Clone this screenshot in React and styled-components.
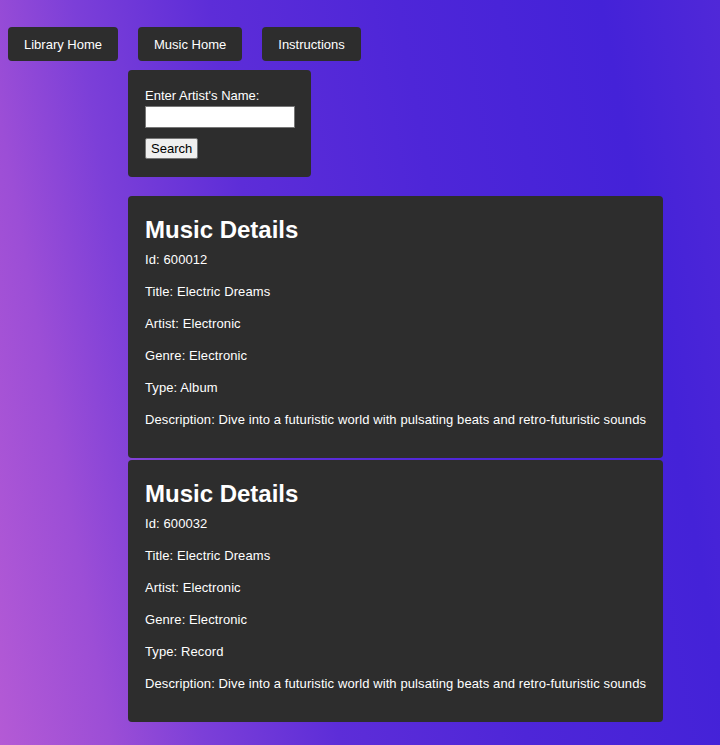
import React, { useState } from 'react';
import styled, { createGlobalStyle } from 'styled-components';

const GlobalStyle = createGlobalStyle`
  html, body {
    min-height: 100%;
  }
  body {
    margin: 8px;
    min-height: 729px;
    font-family: "Liberation Sans", Arial, sans-serif;
    color: #ffffff;
    background: linear-gradient(80deg, #b45ad5 0%, #9c4ed6 13%, #7c3fd8 24%, #5d2dd8 40%, #4e26d8 62%, #4422d8 86%, #5028d8 100%);
    background-attachment: fixed;
  }
`;

const music = [
  { id: 600012, title: 'Electric Dreams', artist: 'Electronic', genre: 'Electronic', type: 'Album',
    description: 'Dive into a futuristic world with pulsating beats and retro-futuristic sounds' },
  { id: 600032, title: 'Electric Dreams', artist: 'Electronic', genre: 'Electronic', type: 'Record',
    description: 'Dive into a futuristic world with pulsating beats and retro-futuristic sounds' },
];

const App = () => {
  const [artist, setArtist] = useState('');

  return (
    <>
      <GlobalStyle />
      <Nav>
        <NavButton>Library Home</NavButton>
        <NavButton>Music Home</NavButton>
        <NavButton>Instructions</NavButton>
      </Nav>
      <Content>
        <SearchBox onSubmit={e => e.preventDefault()}>
          <Label htmlFor="artist">Enter Artist's Name:</Label>
          <TextInput id="artist" value={artist} onChange={e => setArtist(e.target.value)} />
          <SearchButton type="submit">Search</SearchButton>
        </SearchBox>
        <CardList>
          {music.map(item => (
            <Card key={item.id}>
              <Heading>Music Details</Heading>
              <Field>Id: {item.id}</Field>
              <Field>Title: {item.title}</Field>
              <Field>Artist: {item.artist}</Field>
              <Field>Genre: {item.genre}</Field>
              <Field>Type: {item.type}</Field>
              <Field>Description: {item.description}</Field>
            </Card>
          ))}
        </CardList>
      </Content>
    </>
  );
};

export default App;

const Nav = styled.nav`
  display: flex;
  gap: 20px;
  padding-top: 19px;
`;

const NavButton = styled.button`
  height: 34px;
  padding: 0 16px;
  border: none;
  border-radius: 4px;
  background: #2d2d2d;
  color: #ffffff;
  font-family: inherit;
  font-size: 13px;
  cursor: pointer;
`;

const Content = styled.div`
  margin-left: 120px;
  width: 535px;
  padding-top: 9px;
`;

const SearchBox = styled.form`
  width: 183px;
  box-sizing: border-box;
  padding: 18px 17px 18px;
  background: #2d2d2d;
  border-radius: 4px;
  display: flex;
  flex-direction: column;
  align-items: flex-start;
`;

const Label = styled.label`
  font-size: 13px;
  line-height: 16px;
  margin-bottom: 2px;
`;

const TextInput = styled.input`
  width: 150px;
  height: 22px;
  box-sizing: border-box;
  border: 1px solid #767676;
  background: #ffffff;
  padding: 1px 2px;
  font-size: 13px;
  outline: none;
`;

const SearchButton = styled.button`
  margin-top: 10px;
  height: 21px;
  padding: 0 5px;
  background: #efefef;
  border: 1px solid #767676;
  border-radius: 2px;
  color: #000000;
  font-family: inherit;
  font-size: 13px;
`;

const CardList = styled.div`
  margin-top: 19px;
  display: flex;
  flex-direction: column;
  gap: 2px;
`;

const Card = styled.section`
  box-sizing: border-box;
  padding: 19px 10px 15px 17px;
  background: #2d2d2d;
  border-radius: 4px;
`;

const Heading = styled.h2`
  margin: 0 0 7px;
  font-size: 24px;
  line-height: 29px;
  font-weight: 700;
`;

const Field = styled.p`
  margin: 0 0 15px;
  font-size: 13px;
  letter-spacing: 0.1px;
  line-height: 17px;
`;
